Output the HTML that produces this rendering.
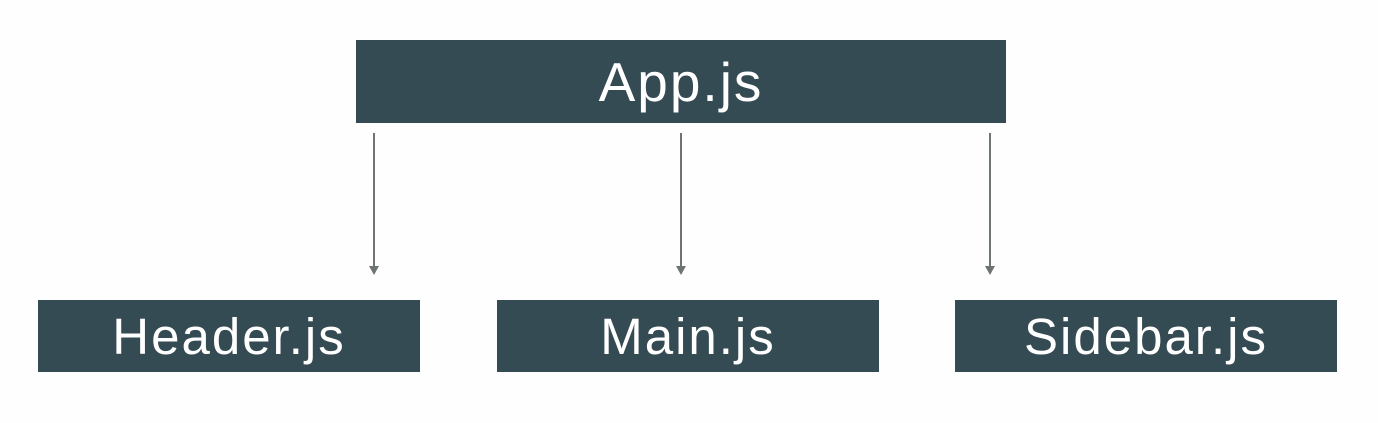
<!DOCTYPE html>
<html><head><style>
html,body{margin:0;padding:0;background:#fefefe;width:1378px;height:423px;overflow:hidden;position:relative}
.b{position:absolute;background:#354b53;color:#fff;font-family:"Liberation Sans",sans-serif;display:flex;align-items:center;justify-content:center;letter-spacing:2px}
.l{position:absolute;width:2px;background:#6e7374}
.h{position:absolute;width:0;height:0;border-left:5px solid transparent;border-right:5px solid transparent;border-top:9px solid #6e7374}
</style></head><body>
<div class="b" style="left:356px;top:40px;width:650px;height:83px;font-size:55px">App.js</div>
<div class="l" style="left:373px;top:133px;height:135px"></div><div class="h" style="left:369px;top:266px"></div>
<div class="l" style="left:680px;top:133px;height:135px"></div><div class="h" style="left:676px;top:266px"></div>
<div class="l" style="left:989px;top:133px;height:135px"></div><div class="h" style="left:985px;top:266px"></div>
<div class="b" style="left:38px;top:300px;width:382px;height:72px;font-size:51px">Header.js</div>
<div class="b" style="left:497px;top:300px;width:382px;height:72px;font-size:51px">Main.js</div>
<div class="b" style="left:955px;top:300px;width:382px;height:72px;font-size:51px">Sidebar.js</div>
</body></html>
